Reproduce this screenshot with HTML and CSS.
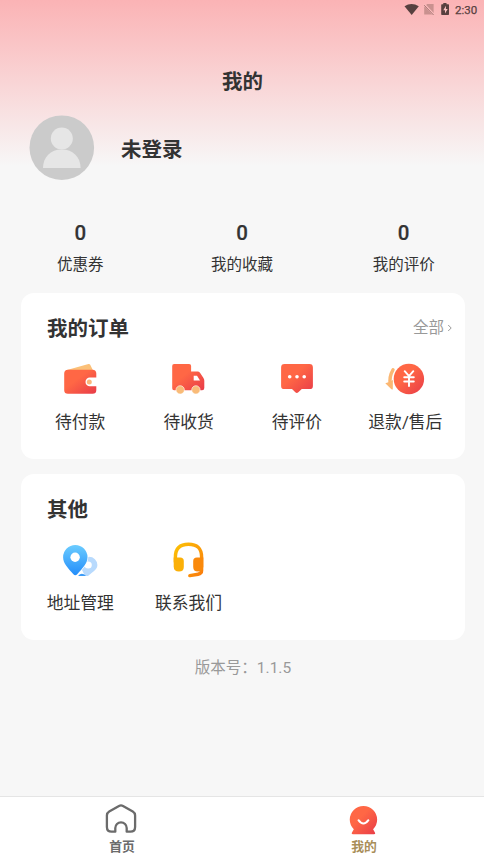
FILE: index.html
```html
<!DOCTYPE html>
<html lang="zh-CN">
<head>
<meta charset="utf-8">
<title>我的</title>
<link rel="stylesheet" href="styles.css">
</head>
<body>
<svg class="defs" width="0" height="0" aria-hidden="true">
  <defs>
    <linearGradient id="red" x1="0" y1="0" x2="1" y2="1"><stop offset=".4" stop-color="#ff6745"/><stop offset="1" stop-color="#e83b48"/></linearGradient>
    <linearGradient id="blue" x1="0" y1="0" x2="0" y2="1"><stop offset="0" stop-color="#6bccff"/><stop offset="1" stop-color="#238dfa"/></linearGradient>
    <linearGradient id="orange" x1="0" y1="0" x2="1" y2="1"><stop offset="0" stop-color="#fcc105"/><stop offset="1" stop-color="#fa7d0c"/></linearGradient>
  </defs>
</svg>
<div class="screen">
  <header class="hero">
    <div class="status">
      <svg width="46" height="14" viewBox="404 2 46 14">
        <path d="M404.500 6.300q7-4.600 14.300 0L411.700 15z" fill="#57403f"/>
        <path d="M427.200 4H433.600V14.600H424.200V7z" fill="#c9918f"/>
        <path d="M424 4.200l10 10.600" stroke="#fbbabb" stroke-width="2"/>
        <path d="M424.200 5.200l9.400 9.800" stroke="#a87775" stroke-width="1"/>
        <path d="M443.300 3h3.200v1.200h1.900q.6 0 .6.700v9.400q0 .7-.7.700h-6.400q-.7 0-.7-.7V4.900q0-.7.7-.7h1.400z" fill="#57403f"/>
        <path d="M445.900 5.700l-2.600 4.600h1.700v3.300l2.700-4.600h-1.800z" fill="#fbc0c0"/>
      </svg>
      <span class="time">2:30</span>
    </div>
    <h1 class="title">我的</h1>
    <div class="profile">
      <svg class="avatar" width="66" height="66" viewBox="29 115 66 66">
        <circle cx="61.800" cy="147.700" r="32.300" fill="#cbcbcb"/>
        <circle cx="61.800" cy="138.500" r="11" fill="#e6e6e6"/>
        <path d="M43 168c0-11 7.500-18.600 18.800-18.600S80.600 157 80.600 168z" fill="#e6e6e6"/>
      </svg>
      <span class="name">未登录</span>
    </div>
  </header>
  <section class="stats">
    <div class="stat"><b>0</b><span>优惠券</span></div>
    <div class="stat"><b>0</b><span>我的收藏</span></div>
    <div class="stat"><b>0</b><span>我的评价</span></div>
  </section>
  <main class="cards">
    <section class="card">
      <div class="card-head"><h2>我的订单</h2><a class="all">全部<svg width="6" height="8" viewBox="0 0 6 8"><path d="M1.200 1l3 3-3 3" fill="none" stroke="#999"/></svg></a></div>
      <div class="grid">
        <div class="item">
          <svg width="40" height="40" viewBox="60 359 40 40">
            <path d="M67 370l21.500-6q1.200-.3 1.700.8l3 6z" fill="#fbc078"/>
            <path d="M68 369.800H92.500q3.800 0 3.800 3.800v4h-6.500a4.300 4.300 0 0 0 0 8.600h6.500v4q0 3.600-3.800 3.600H68q-3.800 0-3.800-3.600V373.600q0-3.800 3.800-3.800z" fill="url(#red)"/>
            <circle cx="89.300" cy="381.900" r="2.500" fill="#fbb77b"/>
          </svg><span>待付款</span>
        </div>
        <div class="item">
          <svg width="40" height="40" viewBox="168.900 359 40 40">
            <path d="M174 364h15q2 0 2 2v5.500h6.500q1.500 0 2.400 1.300l3.300 5q1 1.500 1 3V388q0 2.200-2.200 2.200H174q-1.900 0-1.900-2V366q0-2 1.900-2z" fill="url(#red)"/>
            <path d="M193.600 375.700h3.300l3 4.900h-6.300z" fill="#fff"/>
            <g fill="#f9bb78" stroke="#fff" stroke-width=".6"><circle cx="180.100" cy="389.900" r="4.200"/><circle cx="195.800" cy="389.900" r="4.200"/></g>
          </svg><span>待收货</span>
        </div>
        <div class="item">
          <svg width="40" height="40" viewBox="277 359 40 40">
            <path d="M284.500 364h25q3.400 0 3.400 3.400v18.500q0 3.200-3.400 3.200h-7.700l-3.500 3.200q-1.500 1.200-3 0l-3.300-3.200h-7.500q-3.400 0-3.400-3.200V367.400q0-3.400 3.400-3.400z" fill="url(#red)"/>
            <g fill="#fff"><circle cx="289.700" cy="376.700" r="1.800"/><circle cx="297" cy="376.700" r="1.800"/><circle cx="304.200" cy="376.700" r="1.800"/></g>
          </svg><span>待评价</span>
        </div>
        <div class="item">
          <svg width="40" height="40" viewBox="385.300 359 40 40">
            <path d="M393.300 369.800q-4.200 7-2.600 15" fill="none" stroke="#fbb772" stroke-width="3.400" stroke-linecap="round"/>
            <path d="M385.600 383.200q4-.9 7.600-3.200l-.1 9.200q-1 .5-1.900-.4z" fill="#fbb772"/>
            <circle cx="409.200" cy="379" r="15.800" fill="#fff"/>
            <circle cx="409.200" cy="379" r="15.200" fill="url(#red)"/>
            <path d="M405 371.200l4.300 4.900 4.300-4.900M409.300 376v10M404.500 377.200h9.600M404.500 381.500h9.600" fill="none" stroke="#fff" stroke-width="1.900" stroke-linecap="round"/>
          </svg><span>退款/售后</span>
        </div>
      </div>
    </section>
    <section class="card">
      <div class="card-head"><h2>其他</h2></div>
      <div class="grid">
        <div class="item">
          <svg width="40" height="40" viewBox="60 540 40 40">
            <path d="M89 556.700a8.400 8.400 0 0 1 8.400 8.400c0 4.300-4.300 6.500-9.400 11h-3l-3-6 .6-5a8.400 8.400 0 0 1 6.400-8.400z" fill="#b8dafd"/>
            <circle cx="88.200" cy="565" r="3.600" fill="#fff"/>
            <path d="M75.300 545a12.200 12.200 0 0 1 12.200 12.200c0 6.200-5 11-10.300 17q-1.900 2.200-3.800 0c-5.300-6-10.300-10.800-10.300-17A12.200 12.200 0 0 1 75.300 545z" fill="url(#blue)" stroke="#fff" stroke-width="1.600" paint-order="stroke"/>
            <circle cx="75.100" cy="557.200" r="4.700" fill="#fff"/>
            <path d="M78 576q3.800-4.500 8 0z" fill="#3d9cf7"/>
          </svg><span>地址管理</span>
        </div>
        <div class="item">
          <svg width="40" height="40" viewBox="168.600 540 40 40">
            <path d="M175 562v-5q0-12.800 13.100-12.800T201.200 557v13.500q0 3.100-3.500 3.700l-8.300 1.400" fill="none" stroke="url(#orange)" stroke-width="3.400" stroke-linecap="round"/>
            <path d="M173.300 557.500h6.500q3.600 0 3.600 3.600v6q0 4.500-4.800 4.500-5.300 0-5.300-5z" fill="#fbb008"/>
            <path d="M202.900 557.500h-6.500q-3.600 0-3.600 3.600v6q0 4.500 4.800 4.500 5.300 0 5.300-5z" fill="#fa890b"/>
          </svg><span>联系我们</span>
        </div>
      </div>
    </section>
  </main>
  <p class="version">版本号：1.1.5</p>
  <nav class="tabs">
    <a class="tab">
      <svg width="36" height="32" viewBox="103 803 36 32">
        <path d="M119 806q2-1.200 4 0l9.800 5.600q2.300 1.400 2.300 4V827q0 4.700-4.700 4.700h-3.700V828a5.700 5.700 0 0 0-11.400 0v3.700h-3.700q-4.700 0-4.700-4.700V815.600q0-2.600 2.300-4z" fill="none" stroke="#6b6b6b" stroke-width="2.300" stroke-linejoin="round"/>
      </svg><span>首页</span>
    </a>
    <a class="tab active">
      <svg width="36" height="32" viewBox="345 803 36 32">
        <path d="M353.800 829.300a13.700 13.700 0 1 1 19.300 0l1.800 3.200q.9 1.700-1 1.700h-20.900q-1.900 0-1-1.700z" fill="url(#red)"/>
        <path d="M358.500 820.200q4.900 6.800 9.900 0" fill="none" stroke="#fff" stroke-width="2" stroke-linecap="round"/>
      </svg><span>我的</span>
    </a>
  </nav>
</div>
</body>
</html>
```

FILE: styles.css
```css
* { box-sizing: border-box; }
body { margin: 0; font-family: Roboto, "Noto Sans CJK SC", sans-serif; color: #333; }
.defs { display: block; }
.screen { height: 860px; display: flex; flex-direction: column; background: linear-gradient(#fbb3b5 0, #f7f7f7 166px); }
.hero { height: 200px; flex: none; }
.status { height: 20px; padding: 2px 6px 0 0; display: flex; justify-content: flex-end; align-items: flex-start; }
.time { width: 23px; margin-left: 5px; font-size: 11.500px; line-height: 16px; color: #57403f; -webkit-text-stroke: .25px #57403f; }
.title { margin: 47px 0 0; padding-left: 1px; text-align: center; font-size: 20.500px; line-height: 30px; font-weight: 700; }
.profile { display: flex; align-items: center; margin: 18px 0 0 29px; }
.name { margin-left: 26px; padding-top: 3px; font-size: 20.500px; font-weight: 700; line-height: 30px; }
.stats { display: grid; grid-template-columns: repeat(3, 161.700px); justify-content: center; padding: 20px 0 0; height: 93px; flex: none; }
.stat { display: flex; flex-direction: column; align-items: center; }
.stat b { font-size: 20.500px; line-height: 26px; font-weight: 500; -webkit-text-stroke: .2px #333; }
.stat span { font-size: 15.500px; line-height: 22px; margin-top: 8px; }
.cards { display: flex; flex-direction: column; gap: 15px; padding: 0 19px 0 21px; }
.card { height: 166px; background: #fff; border-radius: 13px; padding: 21px 5px 0; }
.card-head { display: flex; justify-content: space-between; align-items: center; height: 30px; padding: 0 7px 0 21px; }
.card h2 { margin: 0; font-size: 20.500px; line-height: 30px; font-weight: 700; }
.all { display: flex; align-items: center; gap: 3px; color: #999; font-size: 15.500px; line-height: 22px; margin-top: -3px; }
.grid { display: grid; grid-template-columns: repeat(4, 108.400px); padding-top: 15px; }
.item { display: flex; flex-direction: column; align-items: center; font-size: 16.800px; line-height: 24px; }
.item span { margin-top: 10.500px; }
.version { margin: 17px 0 0; padding-left: 2px; text-align: center; font-size: 15.500px; line-height: 22px; color: #999; }
.tabs { height: 64px; margin-top: auto; background: #fff; border-top: 1px solid #e5e5e5; display: grid; grid-template-columns: 1fr 1fr; }
.tab { display: flex; flex-direction: column; align-items: center; padding-top: 6px; font-size: 12.800px; line-height: 18px; font-weight: 700; color: #6b6b6b; }
.tab span { margin: 3px 0 0 2px; }
.active { color: #a98e58; }
```
